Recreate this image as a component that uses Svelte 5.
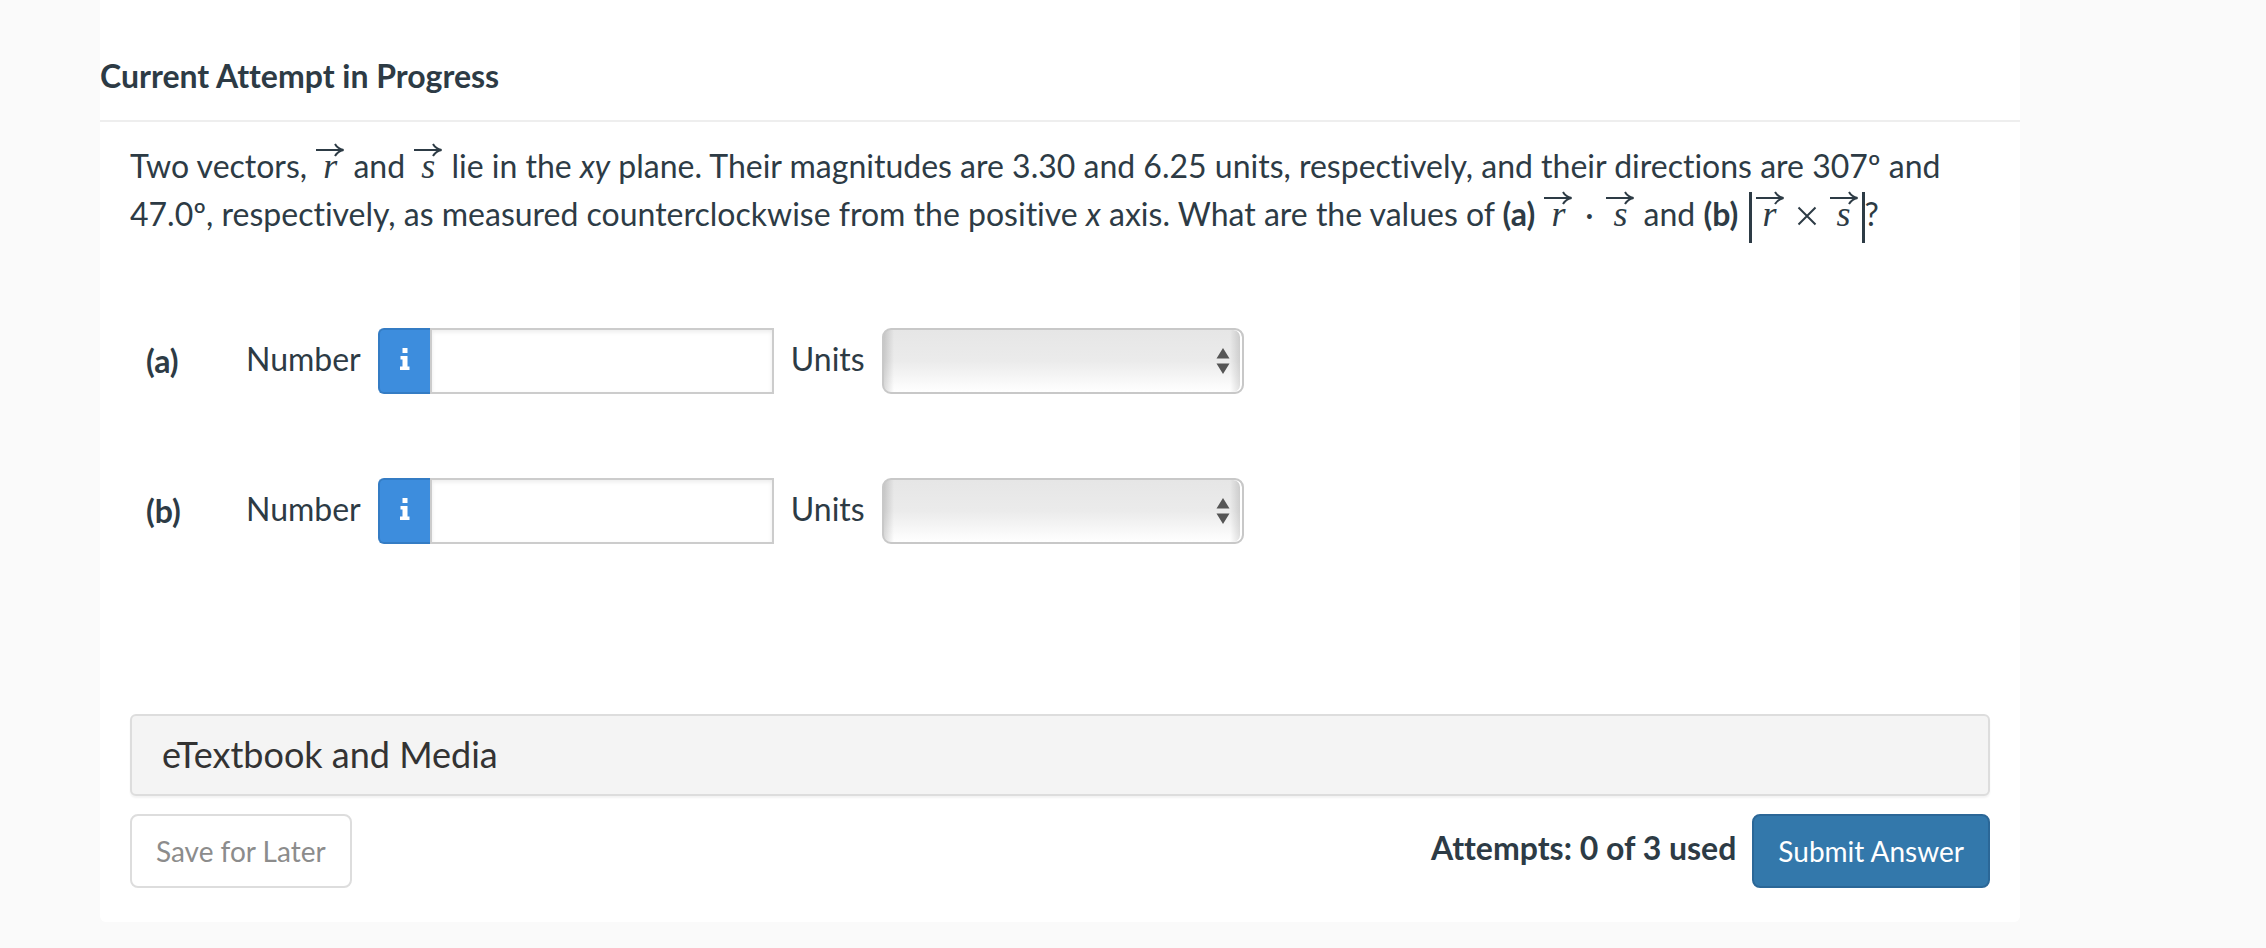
<script>
  const parts = ['a', 'b'];
  let answers = $state({ a: '', b: '' });
  let units = $state({ a: '', b: '' });
</script>

{#snippet vec(name)}
  <span class="vec"><svg viewBox="0 0 30 14" aria-hidden="true"><path d="M1 7H28M20 1Q22.500 5.500 28.500 7Q22.500 8.500 20 13" /></svg><i>{name}</i></span>
{/snippet}

<main class="panel">
  <h1>Current Attempt in Progress</h1>
  <div class="body">
    <p class="question">
      Two vectors, {@render vec('r')} and {@render vec('s')} lie in the <em>xy</em> plane. Their magnitudes are 3.30 and 6.25 units, respectively, and their directions are 307º and 47.0º, respectively, as measured counterclockwise from the positive <em>x</em> axis. What are the values of <b>(a)</b> <span class="math">{@render vec('r')}<span class="dot">·</span>{@render vec('s')}</span> and <b>(b)</b> <span class="math abs">{@render vec('r')}<svg class="times" viewBox="0 0 20 20" aria-label="times"><path d="M1.500 1.500L18.500 18.500M18.500 1.500L1.500 18.500" /></svg>{@render vec('s')}</span>?
    </p>

    <div class="parts">
      {#each parts as part}
        <div class="row">
          <b class="part">({part})</b>
          <label class="number" for="number-{part}">Number</label>
          <div class="entry">
            <button type="button" class="info" aria-label="Input help">
              <svg viewBox="0 0 12 24" aria-hidden="true"><path d="M3.500 1h5v5h-5zM1.500 9h7v10.500h2v3.500H1v-3.500h2.500v-7h-2z" /></svg>
            </button>
            <input id="number-{part}" type="text" bind:value={answers[part]} />
          </div>
          <label class="units" for="units-{part}">Units</label>
          <div class="select">
            <select id="units-{part}" bind:value={units[part]}>
              <option value=""></option>
            </select>
            <svg viewBox="0 0 14 26" aria-hidden="true"><path d="M7 0L13.500 10.500H0.500zM7 26L13.500 15.500H0.500z" /></svg>
          </div>
        </div>
      {/each}
    </div>

    <button type="button" class="media">eTextbook and Media</button>

    <footer>
      <button type="button" class="btn save">Save for Later</button>
      <span class="attempts">Attempts: 0 of 3 used</span>
      <button type="button" class="btn submit">Submit Answer</button>
    </footer>
  </div>
</main>

<style>
  :global(body) {
    background: #fafafa;
    color: #2d3b45;
    font-family: Lato, sans-serif;
    font-size: 32px;
    line-height: 48px;
    font-variant-ligatures: none;
  }
  button,
  input,
  select {
    font: inherit;
    font-variant-ligatures: none;
    color: inherit;
    margin: 0;
    box-sizing: border-box;
  }
  .panel {
    margin: 0 246px 0 100px;
    padding: 52px 0 34px;
    background: #fff;
    border-radius: 0 0 6px 6px;
  }
  h1 {
    margin: 0;
    padding-bottom: 20px;
    border-bottom: 2px solid #eee;
    font-size: 32px;
    line-height: 48px;
    font-weight: 700;
  }
  .body {
    padding: 0 30px;
  }
  .question {
    margin: 0;
    padding-top: 20px;
  }
  .vec {
    position: relative;
    display: inline-block;
    width: 30px;
    text-align: center;
    line-height: 32px;
  }
  .vec i {
    font-family: 'Liberation Serif', serif;
    font-size: 36px;
  }
  .vec svg {
    position: absolute;
    left: 0;
    top: -7px;
    width: 30px;
    height: 14px;
  }
  svg {
    display: block;
  }
  .vec svg path,
  .times path {
    fill: none;
    stroke: currentColor;
    stroke-width: 2;
  }
  .math {
    display: inline-flex;
    align-items: baseline;
    line-height: 32px;
  }
  .dot {
    width: 32px;
    text-align: center;
  }
  .abs {
    padding: 6px 3px 13px;
    margin: -6px 0 -13px 2px;
    border: solid currentColor;
    border-width: 0 3px;
  }
  .times {
    width: 20px;
    height: 20px;
    margin: 0 12px;
  }
  .parts {
    display: grid;
    gap: 84px;
    padding: 90px 0 170px 16px;
  }
  .row {
    display: flex;
    align-items: center;
  }
  .part {
    min-width: 100px;
  }
  .number {
    margin-right: 17px;
    padding-bottom: 4px;
  }
  .entry {
    display: flex;
    height: 66px;
  }
  .info {
    display: grid;
    place-items: center;
    width: 52px;
    padding: 0;
    border: 2px solid #347cc4;
    border-right: 0;
    border-radius: 6px 0 0 6px;
    background: #3d8ddd;
    color: #fff;
  }
  .info svg {
    width: 12px;
    height: 24px;
    margin-bottom: 4px;
    fill: currentColor;
  }
  .entry input {
    width: 344px;
    padding: 0 12px;
    border: 2px solid #ccc;
    border-radius: 0;
    background: #fff;
    box-shadow: inset 0 2px 4px rgba(0, 0, 0, 0.08);
  }
  .units {
    margin: 0 17px;
    padding-bottom: 4px;
  }
  .select {
    position: relative;
    width: 362px;
    height: 66px;
  }
  select {
    width: 100%;
    height: 100%;
    appearance: none;
    padding: 0 40px 0 12px;
    border: 2px solid #c8c8c8;
    border-radius: 9px;
    background:
      linear-gradient(90deg, rgba(0, 0, 0, 0.14), transparent 10px, transparent calc(100% - 12px), rgba(0, 0, 0, 0.14)),
      linear-gradient(#e6e6e6, #ebebeb 50%, #fff);
    box-shadow: inset -2px 0 0 #fff;
  }
  .select svg {
    position: absolute;
    right: 14px;
    top: 20px;
    width: 14px;
    height: 26px;
    fill: #555;
    pointer-events: none;
  }
  .media {
    display: block;
    width: 100%;
    height: 82px;
    padding: 0 30px 2px;
    border: 2px solid #ddd;
    border-radius: 6px;
    background: #f4f4f4;
    box-shadow: 0 2px 2px rgba(0, 0, 0, 0.05);
    color: #333;
    font-size: 36px;
    text-align: left;
  }
  footer {
    display: flex;
    align-items: center;
    margin-top: 18px;
  }
  .btn {
    height: 74px;
    padding: 0 24px;
    border: 2px solid #ddd;
    border-radius: 8px;
    background: #fff;
    color: #8c8c8c;
    font-size: 28px;
  }
  .submit {
    border-color: #2b6797;
    background: #3378ab;
    color: #fff;
  }
  .attempts {
    margin: 0 16px 6px auto;
    font-weight: 700;
  }
</style>
